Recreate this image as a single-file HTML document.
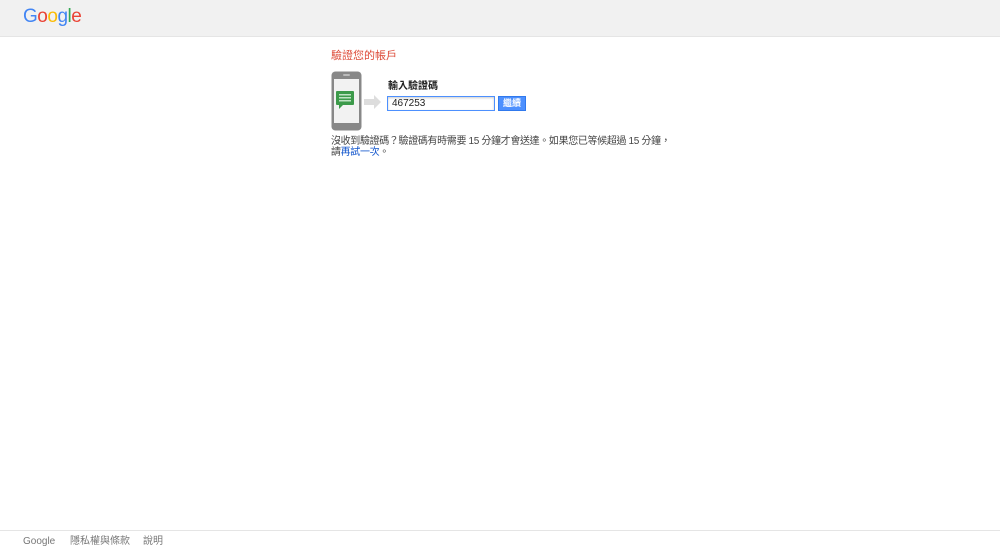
<!DOCTYPE html>
<html><head><meta charset="utf-8"><style>
body{margin:0;width:1000px;height:549px;position:relative;background:#fff;font-family:"Liberation Sans","Noto Sans CJK TC",sans-serif;overflow:hidden}
.hdr{position:absolute;left:0;top:0;width:1000px;height:36px;background:#f1f1f1;border-bottom:1px solid #e5e5e5}
.logo{position:absolute;left:23px;top:7px;font-size:19px;letter-spacing:-0.5px;line-height:20px}
.ft{position:absolute;left:0;top:530px;width:1000px;height:19px;border-top:1px solid #e5e5e5;font-size:10px;color:#777}
.ft span{position:absolute;top:5px;line-height:12px;height:12px}
.a{position:absolute}
</style></head><body>
<div class="hdr"><div class="logo"><span style="color:#4285f4">G</span><span style="color:#ea4335">o</span><span style="color:#fbbc05">o</span><span style="color:#4285f4">g</span><span style="color:#34a853">l</span><span style="color:#ea4335">e</span></div></div>
<div class="a" style="left:331px;top:50px;font-size:11px;color:#dd4b39;line-height:13px">驗證您的帳戶</div>
<svg class="a" style="left:331px;top:71px" width="52" height="62">
<rect x="0.5" y="0.5" width="30" height="59" rx="4" fill="#888"/>
<rect x="3" y="8" width="25" height="44" fill="#f2f2f2"/>
<rect x="12" y="3" width="7" height="2" rx="1" fill="#bbb"/>
<rect x="5" y="20" width="18" height="14" rx="1" fill="#3c9a4a"/>
<polygon points="8,34 12,34 8,38" fill="#3c9a4a"/>
<rect x="8" y="23" width="12" height="1.5" fill="#bfe3c4"/><rect x="8" y="26" width="12" height="1.5" fill="#bfe3c4"/><rect x="8" y="29" width="12" height="1.5" fill="#bfe3c4"/>
<polygon points="33,28 43,28 43,24 50,31 43,38 43,34 33,34" fill="#ddd"/>
</svg>
<div class="a" style="left:388px;top:81px;font-size:10px;font-weight:bold;color:#222;line-height:12px">輸入驗證碼</div>
<div class="a" style="left:387px;top:96px;width:108px;height:15px;box-sizing:border-box;border:1px solid #4d90fe;box-shadow:inset 0 1px 2px rgba(0,0,0,.2);font-size:10px;line-height:13px;padding-left:4px;color:#222">467253</div>
<div class="a" style="left:498px;top:96px;width:28px;height:15px;background:#4d90fe;border:1px solid #3079ed;box-sizing:border-box;color:#fff;font-size:9px;font-weight:bold;text-align:center;line-height:13px">繼續</div>
<div class="a" style="left:331px;top:136px;font-size:10px;color:#444;line-height:11px;width:400px;white-space:nowrap;letter-spacing:-0.35px">沒收到驗證碼？驗證碼有時需要 15 分鐘才會送達。如果您已等候超過 15 分鐘，<br>請<span style="color:#15c">再試一次</span>。</div>
<div class="ft"><span style="left:23px">Google</span><span style="left:70px">隱私權與條款</span><span style="left:143px">說明</span></div>
</body></html>
